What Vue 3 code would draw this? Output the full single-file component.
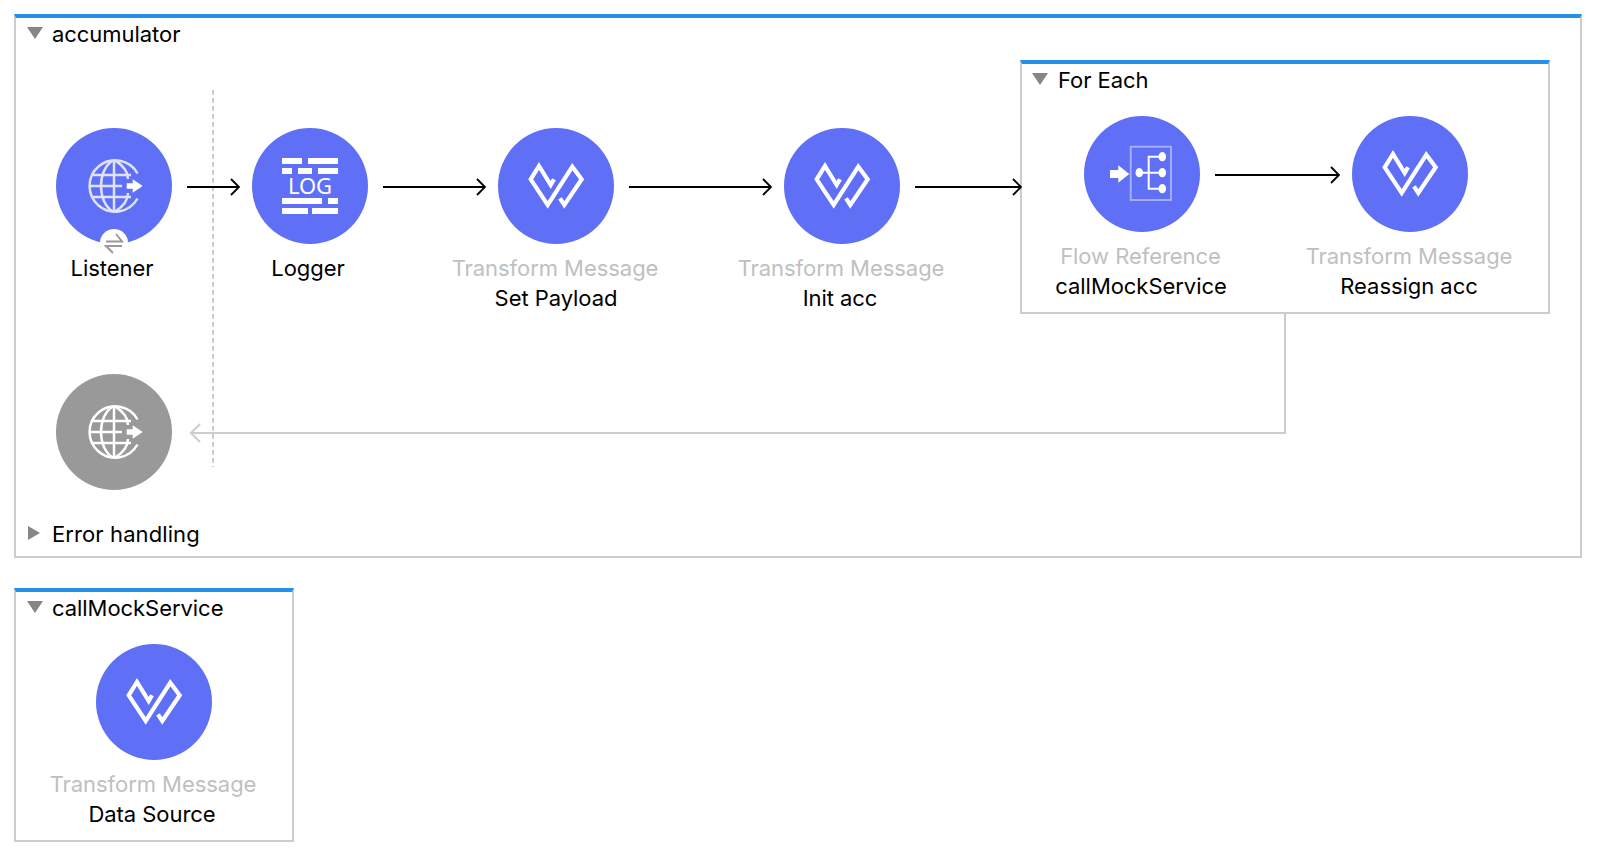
<script setup>
const mainNodes = [
  { icon: 'globe', name: 'Listener', badge: true, conn: 53, nudge: true },
  { icon: 'log', name: 'Logger', conn: 103, nudge: true },
  { icon: 'transform', kind: 'Transform Message', name: 'Set Payload', conn: 143 },
  { icon: 'transform', kind: 'Transform Message', name: 'Init acc', conn: 107, into: true, nudge: true }
]
</script>

<template>
  <div class="page">
    <svg class="defs" aria-hidden="true">
      <defs>
        <symbol id="disc-transform" viewBox="-58 -58 116 116">
          <circle r="58" fill="#5f70f6" />
          <path d="M-2 -6.7 L-5.3 -1 L-17 -20 L-25.3 -6.7 L-8.3 19 L16.3 -19.3 L25.7 -6.7 L8.3 19 L4 12.3" fill="none" stroke="#fff" stroke-width="4.2" stroke-linejoin="miter" />
        </symbol>
        <symbol id="disc-log" viewBox="-58 -58 116 116">
          <circle r="58" fill="#5f70f6" />
          <g fill="#fff">
            <rect x="-28" y="-28" width="20" height="6" />
            <rect x="-2" y="-28" width="30" height="6" />
            <rect x="-28" y="-18" width="10" height="6" />
            <rect x="-12" y="-18" width="14" height="6" />
            <rect x="8" y="-18" width="20" height="6" />
            <rect x="-28" y="12" width="40" height="6" />
            <rect x="18" y="12" width="10" height="6" />
            <rect x="-28" y="22" width="26" height="6" />
            <rect x="2" y="22" width="26" height="6" />
            <text x="0" y="8" text-anchor="middle" font-family="'Noto Sans', sans-serif" font-size="22">LOG</text>
          </g>
        </symbol>
        <symbol id="disc-globe" viewBox="-58 -58 116 116">
          <circle r="58" fill="#5f70f6" />
          <g fill="none" stroke="#dfe2fb" stroke-width="2.5">
            <path d="M23.5 -12.5 A25.6 25.6 0 1 0 23.5 12.5" />
            <path d="M0 -25.6 V25.6 M-25 0 H8 M-21 -11 H17 M-21 11 H17" />
            <path d="M-1 -25.6 C-17 -16 -17 16 -1 25.6" />
            <path d="M1 -25.6 C10 -20 14 -14 14 -7 M14 7 C14 14 10 20 1 25.6" />
          </g>
          <path d="M12.7 -2.8 H18.7 V-6.7 L28.7 0 L18.7 6.7 V2.8 H12.7 Z" fill="#fff" />
        </symbol>
        <symbol id="disc-globe-gray" viewBox="-58 -58 116 116">
          <circle r="58" fill="#999" />
          <g fill="none" stroke="#fff" stroke-width="2.5">
            <path d="M23.5 -12.5 A25.6 25.6 0 1 0 23.5 12.5" />
            <path d="M0 -25.6 V25.6 M-25 0 H8 M-21 -11 H17 M-21 11 H17" />
            <path d="M-1 -25.6 C-17 -16 -17 16 -1 25.6" />
            <path d="M1 -25.6 C10 -20 14 -14 14 -7 M14 7 C14 14 10 20 1 25.6" />
          </g>
          <path d="M12.7 -2.8 H18.7 V-6.7 L28.7 0 L18.7 6.7 V2.8 H12.7 Z" fill="#fff" />
        </symbol>
        <symbol id="disc-flowref" viewBox="-58 -58 116 116">
          <circle r="58" fill="#5f70f6" />
          <rect x="-11.3" y="-27.3" width="40.3" height="53.3" fill="none" stroke="#aab3fa" stroke-width="1.8" />
          <path d="M-32 -4 H-23.7 V-8.7 L-12.7 0 L-23.7 8.7 V4 H-32 Z" fill="#fff" />
          <path d="M-2.7 -1.3 H20.3 M20.3 -17.3 H6.7 V14.7 H20.3" fill="none" stroke="#fff" stroke-width="2" />
          <g fill="#fff">
            <ellipse cx="-2.7" cy="-1.3" rx="3.8" ry="4.6" />
            <ellipse cx="20.3" cy="-17.3" rx="3.8" ry="4.6" />
            <ellipse cx="20.3" cy="-1.3" rx="3.8" ry="4.6" />
            <ellipse cx="20.3" cy="14.7" rx="3.8" ry="4.6" />
          </g>
        </symbol>
      </defs>
    </svg>

    <section class="scope scope-main">
      <header class="head">
        <span class="tri"></span>
        <span>accumulator</span>
      </header>

      <div class="row">
        <template v-for="n in mainNodes" :key="n.name">
          <div class="node node-offset">
            <div class="disc-wrap">
              <svg class="disc"><use :href="'#disc-' + n.icon" /></svg>
              <span v-if="n.badge" class="badge">
                <svg width="28" height="28" viewBox="-14 -14 28 28">
                  <path d="M-8 -1.5 H8 L2 -9 M8 3 H-8 L-1 10" fill="none" stroke="#9a9a9a" stroke-width="2" />
                </svg>
              </span>
            </div>
            <div v-if="n.kind" class="kind">{{ n.kind }}</div>
            <div class="name" :class="{ nudge: n.nudge }">{{ n.name }}</div>
          </div>
          <svg
            class="conn conn-offset"
            :class="{ into: n.into }"
            :width="n.conn"
            height="20"
          >
            <path :d="`M0 10 H${n.conn - 1} M${n.conn - 9} 2 L${n.conn - 1} 10 L${n.conn - 9} 18`" />
          </svg>
        </template>

        <section class="scope scope-foreach">
          <header class="head head-inner">
            <span class="tri"></span>
            <span>For Each</span>
          </header>
          <div class="inner-row">
            <div class="node">
              <svg class="disc"><use href="#disc-flowref" /></svg>
              <div class="kind kind-flow">Flow Reference</div>
              <div class="name nudge-small">callMockService</div>
            </div>
            <svg class="conn conn-inner" width="125" height="20">
              <path d="M0 10 H124 M116 2 L124 10 L116 18" />
            </svg>
            <div class="node">
              <svg class="disc"><use href="#disc-transform" /></svg>
              <div class="kind">Transform Message</div>
              <div class="name nudge-small">Reassign acc</div>
            </div>
          </div>
        </section>
      </div>

      <div class="return-node">
        <svg class="disc"><use href="#disc-globe-gray" /></svg>
      </div>

      <header class="head head-error">
        <span class="tri tri-right"></span>
        <span class="error-label">Error handling</span>
      </header>

      <svg class="overlay" viewBox="16 18 1564 538" width="1564" height="538">
        <path d="M213 90 V467" class="dash" />
        <path d="M1285 314 V433 H191 M200 424 L191 433 L200 442" class="return" />
      </svg>
    </section>

    <section class="scope scope-mock">
      <header class="head">
        <span class="tri"></span>
        <span>callMockService</span>
      </header>
      <div class="mock-row">
        <div class="node">
          <svg class="disc"><use href="#disc-transform" /></svg>
          <div class="kind">Transform Message</div>
          <div class="name nudge">Data Source</div>
        </div>
      </div>
    </section>
  </div>
</template>

<style>
html, body { background: #fff; }
</style>

<style scoped>
.page {
  width: 1608px;
  height: 856px;
  box-sizing: border-box;
  padding: 14px;
  display: flex;
  flex-direction: column;
  gap: 30px;
  font-family: Inter, "Liberation Sans", sans-serif;
  font-size: 22px;
  letter-spacing: -0.05px;
  color: #000;
  overflow: hidden;
}
.defs { position: absolute; width: 0; height: 0; }
.scope {
  box-sizing: border-box;
  border: 2px solid #ccc;
  border-top: 4px solid #2391ea;
  background: #fff;
  flex: none;
}
.scope-main {
  position: relative;
  width: 1568px;
  height: 544px;
  display: flex;
  flex-direction: column;
}
.scope-foreach { width: 530px; height: 254px; }
.scope-mock { width: 280px; height: 254px; }
.head {
  height: 32px;
  display: flex;
  align-items: center;
  gap: 11px;
  padding-left: 11px;
  white-space: nowrap;
}
.head-inner { padding-left: 10px; gap: 12px; }
.head-error { margin-top: auto; margin-bottom: 6px; }
.error-label { letter-spacing: 0.1px; }
.tri {
  width: 0;
  height: 0;
  border-left: 8px solid transparent;
  border-right: 8px solid transparent;
  border-top: 12px solid #868686;
  margin-top: -3px;
  margin-right: -2px;
  flex: none;
}
.tri-right {
  border-top: 7.5px solid transparent;
  border-bottom: 7.5px solid transparent;
  border-left: 12px solid #868686;
  border-right: 0;
  margin-left: 1px;
  margin-right: 1px;
}
.row {
  display: flex;
  align-items: flex-start;
  margin-top: 10px;
  padding-left: 40px;
  height: 254px;
}
.node {
  width: 116px;
  flex: none;
  display: flex;
  flex-direction: column;
  align-items: center;
  white-space: nowrap;
}
.node-offset { margin-top: 68px; }
.disc-wrap { position: relative; width: 116px; height: 116px; }
.disc { display: block; width: 116px; height: 116px; flex: none; }
.disc + .kind, .disc-wrap + .kind, .disc + .name, .disc-wrap + .name { margin-top: 9px; }
.kind, .name { height: 30px; line-height: 30px; }
.kind { color: #c0c0c0; margin-right: 2px; }
.kind-flow { margin-right: 3px; }
.nudge { margin-right: 4px; }
.nudge-small { margin-right: 2px; }
.badge {
  position: absolute;
  left: 44px;
  top: 101px;
  width: 28px;
  height: 28px;
  border-radius: 50%;
  background: #fff;
}
.badge svg { display: block; }
.conn { flex: none; position: relative; z-index: 1; }
.conn path { fill: none; stroke: #000; stroke-width: 1.8; }
.conn-offset { margin: 117px 12px 0 15px; }
.conn-offset.into { margin-right: -2px; }
.inner-row {
  display: flex;
  align-items: flex-start;
  margin-top: 20px;
  padding-left: 62px;
}
.conn-inner { margin: 49px 12px 0 15px; }
.return-node { margin: 60px 0 0 40px; }
.mock-row { margin-top: 20px; padding-left: 80px; }
.overlay {
  position: absolute;
  left: 0;
  top: 0;
  pointer-events: none;
}
.overlay path { fill: none; stroke: #ccc; }
.dash { stroke-width: 2; stroke-dasharray: 5 3; }
.return { stroke-width: 2; }
</style>
